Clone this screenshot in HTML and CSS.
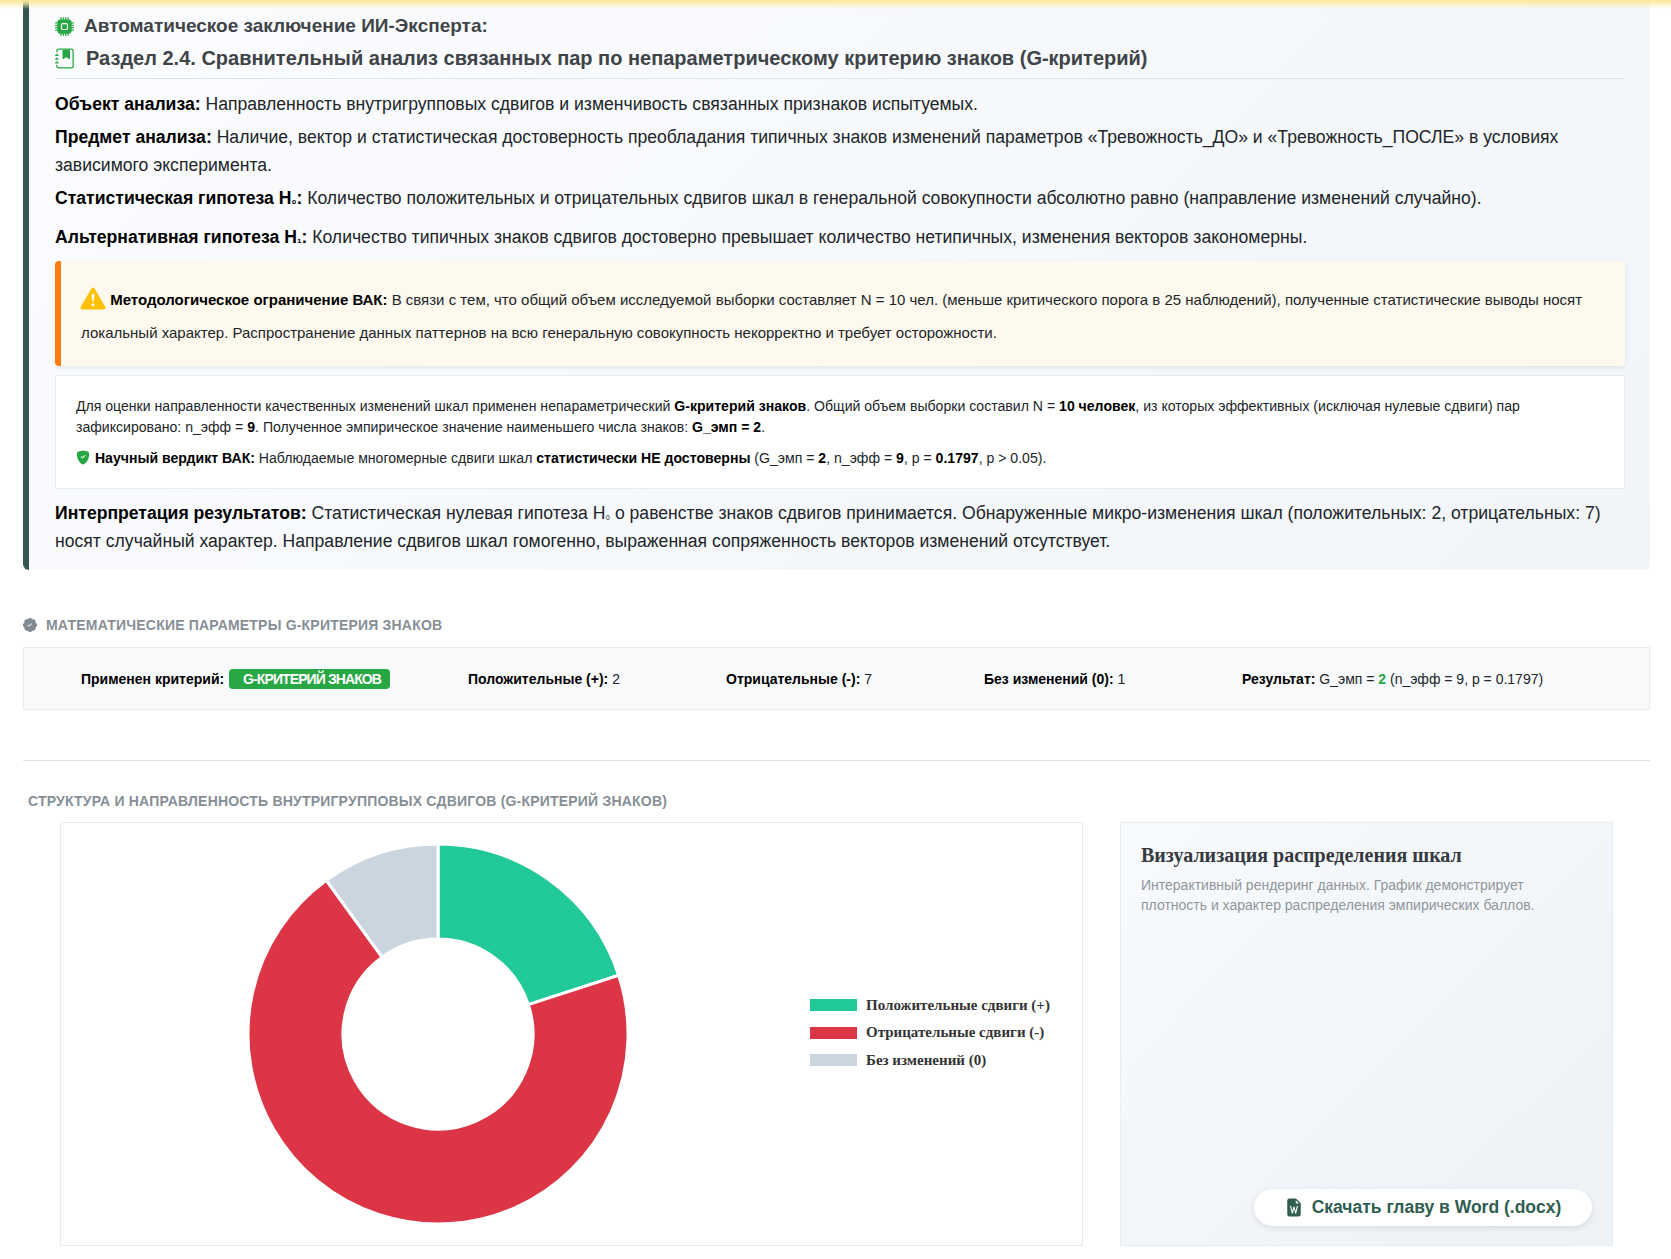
FILE: index.html
```html
<!DOCTYPE html>
<html lang="ru">
<head>
  <meta charset="UTF-8" />
  <title>Раздел 2.4</title>
  <link rel="stylesheet" href="styles.css">
</head>
<body>
  <div class="topGlow"></div>

  <div class="conclusion">
    <div class="expertTitle">
      <svg class="icon" width="19" height="19" viewBox="0 0 16 16" fill="#28a745"><path d="M6.5 6a.5.5 0 0 0-.5.5v3a.5.5 0 0 0 .5.5h3a.5.5 0 0 0 .5-.5v-3a.5.5 0 0 0-.5-.5h-3z"/><path d="M5.5.5a.5.5 0 0 0-1 0V2A2.5 2.5 0 0 0 2 4.5H.5a.5.5 0 0 0 0 1H2v1H.5a.5.5 0 0 0 0 1H2v1H.5a.5.5 0 0 0 0 1H2v1H.5a.5.5 0 0 0 0 1H2A2.5 2.5 0 0 0 4.5 14v1.5a.5.5 0 0 0 1 0V14h1v1.5a.5.5 0 0 0 1 0V14h1v1.5a.5.5 0 0 0 1 0V14h1v1.5a.5.5 0 0 0 1 0V14a2.5 2.5 0 0 0 2.5-2.5h1.5a.5.5 0 0 0 0-1H14v-1h1.5a.5.5 0 0 0 0-1H14v-1h1.5a.5.5 0 0 0 0-1H14v-1h1.5a.5.5 0 0 0 0-1H14A2.5 2.5 0 0 0 11.5 2V.5a.5.5 0 0 0-1 0V2h-1V.5a.5.5 0 0 0-1 0V2h-1V.5a.5.5 0 0 0-1 0V2h-1V.5zm1 4.500h3A1.500 1.500 0 0 1 11 6.500v3A1.500 1.500 0 0 1 9.500 11h-3A1.500 1.500 0 0 1 5 9.500v-3A1.500 1.500 0 0 1 6.500 5z"/></svg>
      <span>Автоматическое заключение ИИ-Эксперта:</span>
    </div>
    <h2 class="sectionTitle">
      <svg class="icon" width="20" height="21" viewBox="0 0 16 16" fill="#28a745"><path fill-rule="evenodd" d="M6 1h6v7a.5.5 0 0 1-.757.429L9 7.083 6.757 8.43A.5.5 0 0 1 6 8V1z"/><path d="M3 0h10a2 2 0 0 1 2 2v12a2 2 0 0 1-2 2H3a2 2 0 0 1-2-2v-1h1v1a1 1 0 0 0 1 1h10a1 1 0 0 0 1-1V2a1 1 0 0 0-1-1H3a1 1 0 0 0-1 1v1H1V2a2 2 0 0 1 2-2z"/><path d="M1 5v-.5a.5.5 0 0 1 1 0V5h.5a.5.5 0 0 1 0 1h-2a.5.5 0 0 1 0-1H1zm0 3v-.5a.5.5 0 0 1 1 0V8h.5a.5.5 0 0 1 0 1h-2a.5.5 0 0 1 0-1H1zm0 3v-.5a.5.5 0 0 1 1 0v.5h.5a.5.5 0 0 1 0 1h-2a.5.5 0 0 1 0-1H1z"/></svg>
      <span>Раздел 2.4. Сравнительный анализ связанных пар по непараметрическому критерию знаков (G-критерий)</span>
    </h2>

    <p class="line firstLine"><b>Объект анализа:</b> Направленность внутригрупповых сдвигов и изменчивость связанных признаков испытуемых.</p>
    <p class="line"><b>Предмет анализа:</b> Наличие, вектор и статистическая достоверность преобладания типичных знаков изменений параметров «Тревожность_ДО» и «Тревожность_ПОСЛЕ» в условиях зависимого эксперимента.</p>
    <p class="line"><b>Статистическая гипотеза H<span class="tinySub">₀</span>:</b> Количество положительных и отрицательных сдвигов шкал в генеральной совокупности абсолютно равно (направление изменений случайно).</p>
    <p class="line altLine"><b>Альтернативная гипотеза H<span class="tinySub">₁</span>:</b> Количество типичных знаков сдвигов достоверно превышает количество нетипичных, изменения векторов закономерны.</p>

    <div class="warning">
      <svg class="warnIcon" width="26" height="25" viewBox="0 0 16 16" fill="#ffc107"><path d="M8.982 1.566a1.13 1.13 0 0 0-1.96 0L.165 13.233c-.457.778.091 1.767.98 1.767h13.713c.889 0 1.438-.99.98-1.767L8.982 1.566zM8 5c.535 0 .954.462.9.995l-.35 3.507a.552.552 0 0 1-1.1 0L7.1 5.995A.905.905 0 0 1 8 5zm.002 6a1 1 0 1 1 0 2 1 1 0 0 1 0-2z"/></svg>
      <b>Методологическое ограничение ВАК:</b> В связи с тем, что общий объем исследуемой выборки составляет N = 10 чел. (меньше критического порога в 25 наблюдений), полученные статистические выводы носят локальный характер. Распространение данных паттернов на всю генеральную совокупность некорректно и требует осторожности.
    </div>

    <div class="resultBox">
      <p class="resultText">Для оценки направленности качественных изменений шкал применен непараметрический <b>G-критерий знаков</b>. Общий объем выборки составил N = <b>10 человек</b>, из которых эффективных (исключая нулевые сдвиги) пар зафиксировано: n_эфф = <b>9</b>. Полученное эмпирическое значение наименьшего числа знаков: <b>G_эмп = 2</b>.</p>
      <p class="verdict">
        <svg class="shield" width="14" height="15" viewBox="0 0 16 16" fill="#28a745"><path d="M8 0c-.69 0-1.843.265-2.928.56-1.11.3-2.229.655-2.887.87a1.54 1.54 0 0 0-1.044 1.262c-.596 4.477.787 7.795 2.465 9.99a11.777 11.777 0 0 0 2.517 2.453c.386.273.744.482 1.048.625.28.132.581.24.829.24s.548-.108.829-.24a7.159 7.159 0 0 0 1.048-.625 11.775 11.775 0 0 0 2.517-2.453c1.678-2.195 3.061-5.513 2.465-9.99a1.541 1.541 0 0 0-1.044-1.263 62.467 62.467 0 0 0-2.887-.87C9.843.266 8.69 0 8 0zm2.146 5.146a.5.5 0 0 1 .708.708l-3 3a.5.5 0 0 1-.708 0l-1.500-1.500a.5.5 0 1 1 .708-.708L7.500 7.793l2.646-2.647z"/></svg>
        <b>Научный вердикт ВАК:</b> Наблюдаемые многомерные сдвиги шкал <b>статистически НЕ достоверны</b> (G_эмп = <b>2</b>, n_эфф = <b>9</b>, p = <b>0.1797</b>, p &gt; 0.05).
      </p>
    </div>

    <p class="interp"><b>Интерпретация результатов:</b> Статистическая нулевая гипотеза H<span class="tinySub">₀</span> о равенстве знаков сдвигов принимается. Обнаруженные микро-изменения шкал (положительных: 2, отрицательных: 7) носят случайный характер. Направление сдвигов шкал гомогенно, выраженная сопряженность векторов изменений отсутствует.</p>
  </div>

  <div class="paramsHead">
    <svg class="icon" width="14" height="14" viewBox="0 0 16 16" fill="#7f8a93"><path d="M10.067.87a2.89 2.89 0 0 0-4.134 0l-.622.638-.89-.011a2.89 2.89 0 0 0-2.924 2.924l.01.89-.636.622a2.89 2.89 0 0 0 0 4.134l.637.622-.011.89a2.89 2.89 0 0 0 2.924 2.924l.89-.01.622.636a2.89 2.89 0 0 0 4.134 0l.622-.637.89.011a2.89 2.89 0 0 0 2.924-2.924l-.01-.89.636-.622a2.89 2.89 0 0 0 0-4.134l-.637-.622.011-.89a2.89 2.89 0 0 0-2.924-2.924l-.89.01-.622-.636zm.287 5.984-3 3a.5.5 0 0 1-.708 0l-1.500-1.500a.5.5 0 1 1 .708-.708L7 8.793l2.646-2.647a.5.5 0 0 1 .708.708z"/></svg>
    <span>Математические параметры G-критерия знаков</span>
  </div>
  <div class="paramsRow">
    <div><b>Применен критерий:</b> <span class="badge">G-КРИТЕРИЙ ЗНАКОВ</span></div>
    <div><b>Положительные (+):</b> 2</div>
    <div><b>Отрицательные (-):</b> 7</div>
    <div><b>Без изменений (0):</b> 1</div>
    <div><b>Результат:</b> G_эмп = <b class="green">2</b> (n_эфф = 9, p = 0.1797)</div>
  </div>

  <hr class="divider">

  <div class="chartTitle">Структура и направленность внутригрупповых сдвигов (G-критерий знаков)</div>
  <div class="chartRow">
    <div class="chartBox">
      <svg class="donut" width="380" height="380" viewBox="0 0 380 380">
        <path fill="#20c997" stroke="#fff" stroke-width="3" d="M190 0A190 190 0 0 1 370.7 131.29L280.35 160.64A95 95 0 0 0 190 95Z"/>
        <path fill="#dc3545" stroke="#fff" stroke-width="3" d="M370.7 131.29A190 190 0 1 1 78.32 36.29L134.16 113.14A95 95 0 1 0 280.35 160.64Z"/>
        <path fill="#cbd5e0" stroke="#fff" stroke-width="3" d="M78.32 36.29A190 190 0 0 1 190 0V95A95 95 0 0 0 134.16 113.14Z"/>
      </svg>
      <div class="legend">
        <div class="legendItem"><i class="swatch swGreen"></i>Положительные сдвиги (+)</div>
        <div class="legendItem"><i class="swatch swRed"></i>Отрицательные сдвиги (-)</div>
        <div class="legendItem"><i class="swatch swGray"></i>Без изменений (0)</div>
      </div>
    </div>
    <div class="sideBox">
      <div class="sideTitle">Визуализация распределения шкал</div>
      <div class="sideText">Интерактивный рендеринг данных. График демонстрирует плотность и характер распределения эмпирических баллов.</div>
      <button class="wordBtn">
        <svg width="18" height="19" viewBox="0 0 16 16" fill="#2f5d50"><path d="M9.293 0H4a2 2 0 0 0-2 2v12a2 2 0 0 0 2 2h8a2 2 0 0 0 2-2V4.707A1 1 0 0 0 13.707 4L10 .293A1 1 0 0 0 9.293 0zM9.500 3.500v-2l3 3h-2a1 1 0 0 1-1-1zM5.485 6.879l1.036 4.144.997-3.655a.5.5 0 0 1 .964 0l.997 3.655 1.036-4.144a.5.5 0 0 1 .97.242l-1.500 6a.5.5 0 0 1-.967.01L8 9.402l-1.018 3.73a.5.5 0 0 1-.967-.01l-1.500-6a.5.5 0 1 1 .97-.242z"/></svg>
        Скачать главу в Word (.docx)
      </button>
    </div>
  </div>
</body>
</html>
```

FILE: styles.css
```css
* {
  box-sizing: border-box;
}

body {
  margin: 0;
  padding: 0 21px 0 23px;
  background: #fff;
  color: #212529;
  font-family: "Liberation Sans", Arial, sans-serif;
  height: 1259px;
  overflow: hidden;
}

b {
  font-weight: bold;
  color: #000;
}

.topGlow {
  position: absolute;
  top: 0;
  left: 0;
  right: 0;
  height: 9px;
  background: linear-gradient(to bottom, #fbe79a 0%, rgba(251, 236, 176, 0.7) 45%, rgba(255, 248, 214, 0) 100%);
}

.icon {
  flex-shrink: 0;
}

.conclusion {
  height: 570px;
  padding: 14px 25px 0 26px;
  border-left: 6px solid #34584f;
  border-radius: 0 0 6px 6px;
  background: linear-gradient(135deg, #fbfcfe, #f1f5f9);
}

.expertTitle {
  display: flex;
  align-items: center;
  gap: 10px;
  height: 24px;
  font-size: 19px;
  font-weight: bold;
  color: #3f4448;
}

.sectionTitle {
  display: flex;
  align-items: center;
  gap: 11px;
  margin: 8px 0 0;
  padding-bottom: 7px;
  height: 33px;
  font-size: 20px;
  color: #3f4448;
  border-bottom: 1px solid #dee2e6;
}

.line {
  margin: 5px 0 0;
  font-size: 17.6px;
  line-height: 28px;
}

.firstLine {
  margin-top: 11px;
}

.altLine {
  margin-top: 11px;
}

.warning {
  margin-top: 10px;
  height: 105px;
  padding: 22px 24px 0 20px;
  border-left: 6px solid #fd7e14;
  border-radius: 4px;
  background: #fef9ee;
  box-shadow: 0 2px 5px rgba(0, 0, 0, 0.08);
  font-size: 15px;
  line-height: 33px;
}

.warnIcon {
  vertical-align: -6px;
  margin-left: -1px;
}

.resultBox {
  margin-top: 9px;
  height: 114px;
  padding: 20px 20px 0;
  background: #fff;
  border: 1px solid #e9ecef;
  font-size: 14.08px;
  line-height: 21px;
}

.resultText {
  margin: 0;
}

.verdict {
  margin: 10px 0 0;
}

.shield {
  vertical-align: -2px;
  margin-right: 1px;
}

.interp {
  margin: 11px 0 0;
  font-size: 17.6px;
  line-height: 27.7px;
}

.tinySub {
  font-size: 11px;
  line-height: 0;
}

.paramsHead {
  display: flex;
  align-items: center;
  gap: 9px;
  margin-top: 46px;
  height: 17px;
  font-size: 14px;
  font-weight: bold;
  letter-spacing: 0.2px;
  color: #868e96;
  text-transform: uppercase;
}

.paramsRow {
  display: grid;
  grid-template-columns: 387px 258px 258px 258px 1fr;
  align-items: center;
  margin-top: 14px;
  padding-left: 57px;
  height: 63px;
  background: #f8f9fa;
  border: 1px solid #e9ecef;
  font-size: 14px;
}

.badge {
  display: inline-block;
  padding: 2px 9px 2px 14px;
  margin-left: 1px;
  border-radius: 4px;
  background: #28a745;
  color: #fff;
  font-weight: bold;
  letter-spacing: -0.9px;
}

.green {
  color: #28a745;
}

.divider {
  margin: 50px 0 0;
  border: 0;
  border-top: 1px solid #dee2e6;
}

.chartTitle {
  margin: 32px 0 0 5px;
  height: 17px;
  font-size: 14px;
  font-weight: bold;
  letter-spacing: 0.2px;
  color: #868e96;
  text-transform: uppercase;
}

.chartRow {
  display: flex;
  gap: 37px;
  margin: 12px 37px 0 37px;
  height: 424px;
}

.chartBox {
  display: flex;
  align-items: center;
  width: 1023px;
  padding-left: 187px;
  background: #fff;
  border: 1px solid #e9ecef;
}

.legend {
  display: flex;
  flex-direction: column;
  gap: 9.5px;
  margin: 0 0 3px 182px;
  font-family: "Liberation Serif", "Times New Roman", serif;
  font-size: 15px;
  font-weight: bold;
  color: #333;
}

.legendItem {
  display: flex;
  align-items: center;
  gap: 9px;
  height: 18px;
  white-space: nowrap;
}

.swatch {
  width: 47px;
  height: 12px;
}

.swGreen {
  background: #20c997;
}

.swRed {
  background: #dc3545;
}

.swGray {
  background: #cbd5e0;
}

.sideBox {
  position: relative;
  flex: 1;
  padding: 21px 20px;
  background: linear-gradient(135deg, #f8fafc, #edf2f7);
  border: 1px solid #e9ecef;
}

.sideTitle {
  font-family: "Liberation Serif", "Times New Roman", serif;
  font-size: 20px;
  font-weight: bold;
  color: #343a40;
}

.sideText {
  margin-top: 8px;
  font-size: 14px;
  line-height: 20px;
  color: #8f969d;
}

.wordBtn {
  position: absolute;
  right: 20px;
  bottom: 19px;
  display: flex;
  align-items: center;
  justify-content: center;
  gap: 9px;
  width: 338px;
  height: 37px;
  border: 0;
  border-radius: 19px;
  background: #fff;
  box-shadow: 0 2px 6px rgba(0, 0, 0, 0.1);
  font-family: "Liberation Sans", Arial, sans-serif;
  font-size: 17.5px;
  font-weight: bold;
  color: #2f5d50;
}
```
